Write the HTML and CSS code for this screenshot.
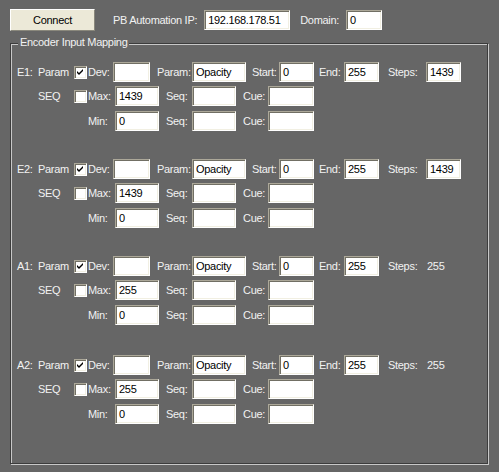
FILE: index.html
```html
<!DOCTYPE html>
<html>
<head>
<meta charset="utf-8">
<link rel="stylesheet" href="styles.css">
</head>
<body>
<div class="topbar">
  <span class="btn">Connect</span>
  <span class="lbl ip-lbl">PB Automation IP:</span>
  <span class="field ip">192.168.178.51</span>
  <span class="lbl dom-lbl">Domain:</span>
  <span class="field dom">0</span>
</div>
<div class="group">
  <span class="legend">Encoder Input Mapping</span>

  <div class="block b-e1">
    <div class="row">
      <span class="id">E1:</span><span class="kind">Param</span>
      <span class="cb"><svg viewBox="0 0 9 9" width="9" height="9"><path d="M1 3 L3 5 L7 1 L7 3 L3 7 L1 5 Z" fill="#000"/></svg></span>
      <span class="l-dev">Dev:</span><span class="field w37"></span>
      <span class="l-param">Param:</span><span class="field w54">Opacity</span>
      <span class="l-start">Start:</span><span class="field w35">0</span>
      <span class="l-end">End:</span><span class="field w35">255</span>
      <span class="l-steps">Steps:</span><span class="field w35">1439</span>
    </div>
    <div class="row r2">
      <span class="id"></span><span class="kind">SEQ</span>
      <span class="cb"></span>
      <span class="l-max">Max:</span><span class="field w44">1439</span>
      <span class="l-seq">Seq:</span><span class="field w44"></span>
      <span class="l-cue">Cue:</span><span class="field w46"></span>
    </div>
    <div class="row r3">
      <span class="pad-min"></span>
      <span class="l-max">Min:</span><span class="field w44">0</span>
      <span class="l-seq">Seq:</span><span class="field w44"></span>
      <span class="l-cue">Cue:</span><span class="field w46"></span>
    </div>
  </div>

  <div class="block b-e2">
    <div class="row">
      <span class="id">E2:</span><span class="kind">Param</span>
      <span class="cb"><svg viewBox="0 0 9 9" width="9" height="9"><path d="M1 3 L3 5 L7 1 L7 3 L3 7 L1 5 Z" fill="#000"/></svg></span>
      <span class="l-dev">Dev:</span><span class="field w37"></span>
      <span class="l-param">Param:</span><span class="field w54">Opacity</span>
      <span class="l-start">Start:</span><span class="field w35">0</span>
      <span class="l-end">End:</span><span class="field w35">255</span>
      <span class="l-steps">Steps:</span><span class="field w35">1439</span>
    </div>
    <div class="row r2">
      <span class="id"></span><span class="kind">SEQ</span>
      <span class="cb"></span>
      <span class="l-max">Max:</span><span class="field w44">1439</span>
      <span class="l-seq">Seq:</span><span class="field w44"></span>
      <span class="l-cue">Cue:</span><span class="field w46"></span>
    </div>
    <div class="row r3">
      <span class="pad-min"></span>
      <span class="l-max">Min:</span><span class="field w44">0</span>
      <span class="l-seq">Seq:</span><span class="field w44"></span>
      <span class="l-cue">Cue:</span><span class="field w46"></span>
    </div>
  </div>

  <div class="block b-a1">
    <div class="row">
      <span class="id">A1:</span><span class="kind">Param</span>
      <span class="cb"><svg viewBox="0 0 9 9" width="9" height="9"><path d="M1 3 L3 5 L7 1 L7 3 L3 7 L1 5 Z" fill="#000"/></svg></span>
      <span class="l-dev">Dev:</span><span class="field w37"></span>
      <span class="l-param">Param:</span><span class="field w54">Opacity</span>
      <span class="l-start">Start:</span><span class="field w35">0</span>
      <span class="l-end">End:</span><span class="field w35">255</span>
      <span class="l-steps">Steps:</span><span class="steps-val">255</span>
    </div>
    <div class="row r2">
      <span class="id"></span><span class="kind">SEQ</span>
      <span class="cb"></span>
      <span class="l-max">Max:</span><span class="field w44">255</span>
      <span class="l-seq">Seq:</span><span class="field w44"></span>
      <span class="l-cue">Cue:</span><span class="field w46"></span>
    </div>
    <div class="row r3">
      <span class="pad-min"></span>
      <span class="l-max">Min:</span><span class="field w44">0</span>
      <span class="l-seq">Seq:</span><span class="field w44"></span>
      <span class="l-cue">Cue:</span><span class="field w46"></span>
    </div>
  </div>

  <div class="block b-a2">
    <div class="row">
      <span class="id">A2:</span><span class="kind">Param</span>
      <span class="cb"><svg viewBox="0 0 9 9" width="9" height="9"><path d="M1 3 L3 5 L7 1 L7 3 L3 7 L1 5 Z" fill="#000"/></svg></span>
      <span class="l-dev">Dev:</span><span class="field w37"></span>
      <span class="l-param">Param:</span><span class="field w54">Opacity</span>
      <span class="l-start">Start:</span><span class="field w35">0</span>
      <span class="l-end">End:</span><span class="field w35">255</span>
      <span class="l-steps">Steps:</span><span class="steps-val">255</span>
    </div>
    <div class="row r2">
      <span class="id"></span><span class="kind">SEQ</span>
      <span class="cb"></span>
      <span class="l-max">Max:</span><span class="field w44">255</span>
      <span class="l-seq">Seq:</span><span class="field w44"></span>
      <span class="l-cue">Cue:</span><span class="field w46"></span>
    </div>
    <div class="row r3">
      <span class="pad-min"></span>
      <span class="l-max">Min:</span><span class="field w44">0</span>
      <span class="l-seq">Seq:</span><span class="field w44"></span>
      <span class="l-cue">Cue:</span><span class="field w46"></span>
    </div>
  </div>
</div>
</body>
</html>
```

FILE: styles.css
```css
html, body {
  margin: 0;
  padding: 0;
}
body {
  width: 499px;
  height: 472px;
  background: #666666;
  font-family: "Liberation Sans", Arial, sans-serif;
  font-size: 11px;
  letter-spacing: -0.3px;
  color: #f2f2f2;
  overflow: hidden;
}
.topbar {
  display: flex;
  align-items: center;
  height: 22px;
  padding: 9px 0 0 10px;
}
.btn {
  box-sizing: border-box;
  width: 85px;
  height: 22px;
  background: #ece9d8;
  color: #000;
  border: 1px solid;
  border-color: #ffffff #8a887c #8a887c #ffffff;
  display: flex;
  align-items: center;
  justify-content: center;
}
.lbl {
  white-space: nowrap;
}
.ip-lbl { margin-left: 18px; }
.field {
  box-sizing: border-box;
  height: 20px;
  background: #ffffff;
  color: #000;
  border: 1px solid;
  border-color: #aca899 #ffffff #ffffff #aca899;
  box-shadow: inset 1px 1px 0 #716f64, inset -1px -1px 0 #f1efe2;
  padding: 0 0 0 3px;
  display: flex;
  align-items: center;
  white-space: nowrap;
  flex: none;
}
.ip { margin-left: 7px; width: 86px; }
.dom-lbl { margin-left: 10px; }
.dom { margin-left: 7px; width: 36px; }

.group {
  position: relative;
  box-sizing: border-box;
  margin: 12px 0 0 10px;
  width: 478px;
  height: 421px;
  border: 1px solid #3c3c3c;
  box-shadow: inset 1px 1px 0 #c8c8c8, 1px 1px 0 #c8c8c8;
  padding: 18px 0 0 6px;
}
.legend {
  position: absolute;
  left: 7px;
  top: -8px;
  line-height: 13px;
  padding: 0 2px;
  background: #666666;
}
.block { display: flex; flex-direction: column; }
.b-e2 { margin-top: 28px; }
.b-a1 { margin-top: 28px; }
.b-a2 { margin-top: 30px; }
.row {
  display: flex;
  align-items: center;
  height: 20px;
  white-space: nowrap;
}
.r2 { margin-top: 4px; }
.r3 { margin-top: 5px; }
.row > span { flex: none; }
.id { width: 21px; }
.kind { width: 36px; }
.cb {
  box-sizing: border-box;
  width: 13px;
  height: 13px;
  background: #fff;
  border: 1px solid;
  border-color: #aca899 #ffffff #ffffff #aca899;
  box-shadow: inset 1px 1px 0 #716f64, inset -1px -1px 0 #f1efe2;
  display: flex;
  align-items: center;
  justify-content: center;
  margin-right: 1px;
}
.cb svg { display: block; }
.pad-min { width: 71px; }
.l-dev { width: 25px; }
.l-max { width: 27px; }
.l-param { margin-left: 7px; width: 35px; }
.l-start { margin-left: 6px; width: 27px; }
.l-end { margin-left: 5px; width: 25px; }
.l-steps { margin-left: 9px; width: 38px; }
.l-seq { margin-left: 7px; width: 26px; }
.l-cue { margin-left: 7px; width: 25px; }
.w35 { width: 35px; }
.w37 { width: 37px; }
.w44 { width: 44px; }
.w46 { width: 46px; }
.w54 { width: 54px; }
.steps-val { padding-left: 1px; }
```
